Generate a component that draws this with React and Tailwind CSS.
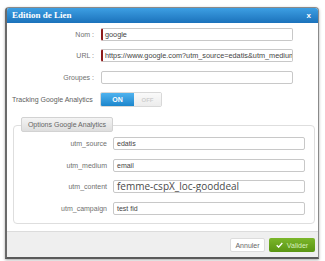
import React from "react";

const sans = { fontFamily: '"Liberation Sans", Arial, sans-serif' };

function Row({ label, value, red, className = "" }) {
  return (
    <div className={`flex items-center h-[13px] ${className}`}>
      <div className="w-[89px] text-right text-[7px] text-[#707070] pr-[2px] leading-none">{label}</div>
      <div
        className={`ml-[5px] w-[192px] h-[13px] bg-white border border-[#c8c8c8] rounded-[2px] overflow-hidden whitespace-nowrap flex items-center text-[7.3px] text-[#444] leading-none ${
          red ? "border-l-[2px] border-l-[#8e1b1b] pl-[2px]" : "pl-[3px]"
        }`}
      >
        {value}
      </div>
    </div>
  );
}

function UtmRow({ label, value, className = "", big }) {
  return (
    <div className={`flex items-center h-[13px] ${className}`}>
      <div className="w-[93px] text-right text-[7px] text-[#707070] leading-none">{label}</div>
      <div
        className={`ml-[6px] w-[192px] h-[13px] bg-white border border-[#c8c8c8] rounded-[2px] overflow-hidden whitespace-nowrap flex items-center pl-[3px] ${
          big ? "text-[10px] text-[#4a4a4a] leading-[11px]" : "text-[7px] text-[#444] leading-none"
        }`}
        style={big ? { fontFamily: '"Open Sans", "Noto Sans", sans-serif' } : undefined}
      >
        {value}
      </div>
    </div>
  );
}

export default function App() {
  return (
    <div className="w-[325px] h-[261px] bg-white overflow-hidden pt-[7px] pl-[5px]" style={sans}>
      <div className="w-[314px] bg-white border border-[#8a8a8a] border-l-[2px] border-b-[2px] border-l-[#6a6a6a] border-b-[#5a5a5a] rounded-t-[4px] shadow-[0_1px_3px_rgba(0,0,0,0.35)] overflow-hidden">
        {/* header */}
        <div className="h-[15px] bg-linear-to-b from-[#3d9fe3] to-[#1b72bb] flex items-center justify-between pl-[5px] pr-[7px]">
          <span
            className="text-white font-bold text-[9px] leading-none"
            style={{ fontFamily: '"Liberation Serif", "Times New Roman", serif' }}
          >
            Edition de Lien
          </span>
          <span className="text-white font-bold text-[8px] leading-none">x</span>
        </div>

        {/* body */}
        <div className="pt-[5px]">
          <Row label="Nom :" value="google" red />
          <Row label="URL :" value="https://www.google.com?utm_source=edatis&utm_medium" red className="mt-[8px]" />
          <Row label="Groupes :" value="" className="mt-[9px]" />

          <div className="flex items-center mt-[8px] h-[15px] pl-[5px]">
            <div className="w-[88px] text-[7px] text-[#606060] leading-none">Tracking Google Analytics</div>
            <div className="flex w-[62px] h-[15px] rounded-[2px] overflow-hidden border border-[#d8d8d8]">
              <div className="w-[33px] h-full bg-linear-to-b from-[#4fb3ef] to-[#1a86cc] flex items-center justify-center text-white font-bold text-[7px] leading-none">
                ON
              </div>
              <div className="flex-1 h-full bg-linear-to-b from-[#fafafa] to-[#ececec] flex items-center justify-center text-[#cfcfcf] font-bold text-[6px] leading-none">
                OFF
              </div>
            </div>
          </div>

          {/* fieldset */}
          <div className="relative mt-[18px] ml-[6px] w-[302px] border border-[#dedede] rounded-[4px] pt-[11px] pb-[8px]">
            <div className="absolute -top-[9px] left-[7px] w-[92px] h-[15px] rounded-[2px] border border-[#d2d2d2] bg-linear-to-b from-[#f4f4f4] to-[#dedede] flex items-center justify-center text-[7px] text-[#666] leading-none">
              Options Google Analytics
            </div>
            <UtmRow label="utm_source" value="edatis" />
            <UtmRow label="utm_medium" value="email" className="mt-[9px]" />
            <UtmRow label="utm_content" value="femme-cspX_loc-gooddeal" big className="mt-[8px]" />
            <UtmRow label="utm_campaign" value="test fid" className="mt-[9px]" />
          </div>

          {/* footer */}
          <div className="mt-[7px] h-[26px] bg-[#efefef] border-t border-[#dcdcdc] flex items-start justify-end pt-[6px] pr-[3px] gap-[4px]">
            <div className="w-[35px] h-[14px] bg-white border border-[#dcdcdc] rounded-[2px] flex items-center justify-center text-[7px] text-[#666] leading-none">
              Annuler
            </div>
            <div className="w-[46px] h-[14px] bg-linear-to-b from-[#7bb62a] to-[#5a9512] rounded-[2px] flex items-center justify-center gap-[4px] text-[7px] text-[#d9efbf] leading-none">
              <svg width="7" height="6" viewBox="0 0 10 8">
                <path d="M1 4.2 L3.8 7 L9 1.2" fill="none" stroke="white" strokeWidth="2" />
              </svg>
              Valider
            </div>
          </div>
        </div>
      </div>
    </div>
  );
}
